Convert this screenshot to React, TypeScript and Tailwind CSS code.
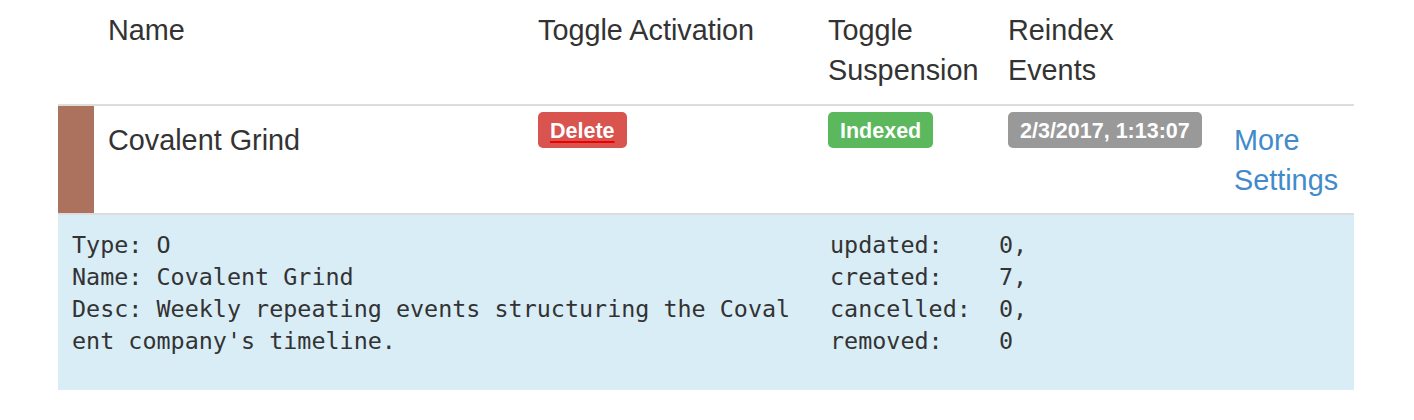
import React from 'react';

const cols = 'grid grid-cols-[36px_430px_290px_180px_226px_134px]';

const Badge: React.FC<{ color: string; underline?: boolean; children: React.ReactNode }> = ({ color, underline, children }) => (
  <span
    className={`flex h-[36px] items-center rounded-[5px] px-[12px] pt-[3px] text-[21.5px] font-bold leading-none text-white ${color}`}
  >
    <span className={underline ? 'underline decoration-[#e00] decoration-[2px] underline-offset-[3px]' : ''}>{children}</span>
  </span>
);

export default function App() {
  return (
    <div className="min-h-[420px] bg-white px-[58px] text-[#333]" style={{ fontFamily: '"Liberation Sans", Arial, sans-serif' }}>
      <div className="w-[1296px]">
        {/* header */}
        <div className={`${cols} border-b-2 border-[#ddd] text-[28.8px] leading-[40px]`}>
          <div />
          <div className="px-[14px] pt-[10px] pb-[14px]">Name</div>
          <div className="px-[14px] pt-[10px] pb-[14px]">Toggle Activation</div>
          <div className="px-[14px] pt-[10px] pb-[14px]">Toggle Suspension</div>
          <div className="px-[14px] pt-[10px] pb-[14px]">Reindex<br />Events</div>
          <div />
        </div>

        {/* row */}
        <div className={`${cols} h-[109px] border-b-2 border-[#ddd] text-[28.8px] leading-[40px]`}>
          <div className="bg-[#ac725e]" />
          <div className="px-[14px] pt-[14px]">Covalent Grind</div>
          <div className="flex items-start px-[14px] pt-[6px]">
            <Badge color="bg-[#d9534f]" underline>Delete</Badge>
          </div>
          <div className="flex items-start px-[14px] pt-[6px]">
            <Badge color="bg-[#5cb85c]">Indexed</Badge>
          </div>
          <div className="flex items-start px-[14px] pt-[6px]">
            <Badge color="bg-[#999]">2/3/2017, 1:13:07</Badge>
          </div>
          <div className="px-[14px] pt-[14px] text-[#428bca]">More Settings</div>
        </div>

        {/* details */}
        <div
          className="grid h-[175px] grid-cols-[756px_540px] bg-[#d9edf7] text-[23.4px] leading-[32px]"
          style={{ fontFamily: '"DejaVu Sans Mono", "Liberation Mono", monospace' }}
        >
          <div className="px-[14px] pt-[14px]">
            <div className="w-[51.5ch] break-all whitespace-pre-wrap">
              {"Type: O\nName: Covalent Grind\nDesc: Weekly repeating events structuring the Covalent company's timeline."}
            </div>
          </div>
          <div className="px-[16px] pt-[14px]">
            <div className="whitespace-pre">{'updated:    0,\ncreated:    7,\ncancelled:  0,\nremoved:    0'}</div>
          </div>
        </div>
      </div>
    </div>
  );
}
